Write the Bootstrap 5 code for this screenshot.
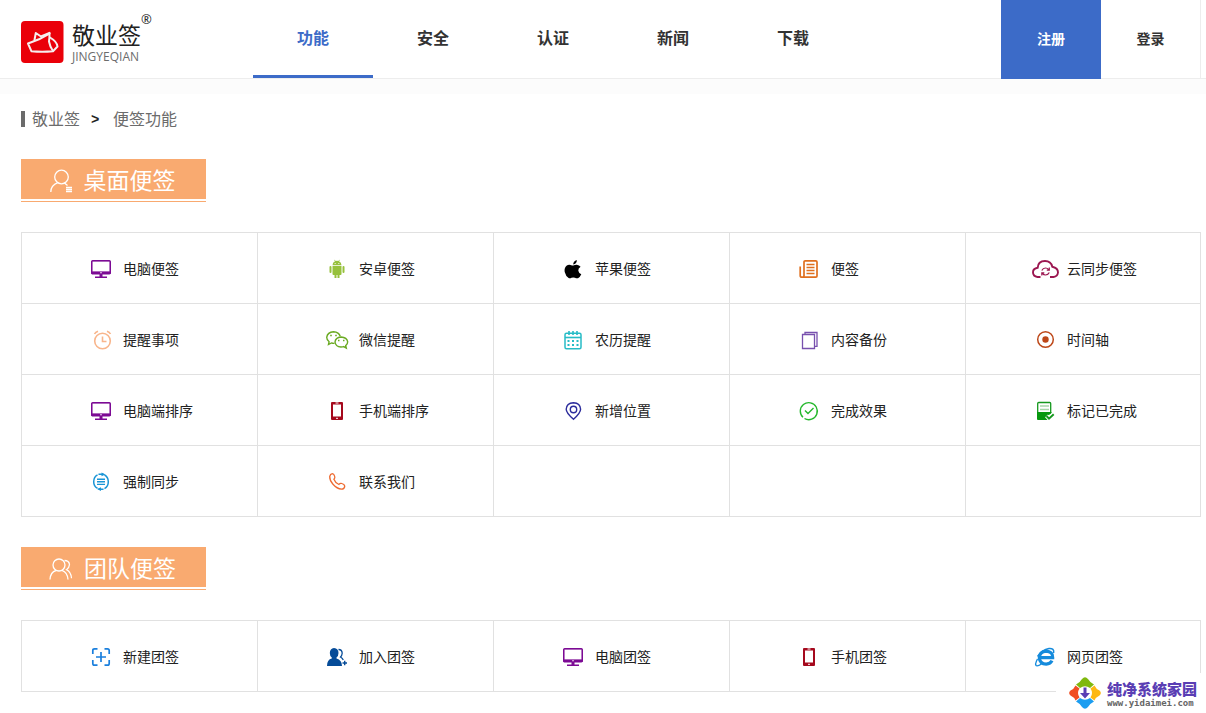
<!DOCTYPE html>
<html lang="zh-CN">
<head>
<meta charset="utf-8">
<meta name="viewport" content="width=device-width, initial-scale=1">
<title>敬业签 - 便签功能</title>
<link rel="stylesheet" href="https://cdn.jsdelivr.net/npm/bootstrap@5.3.0/dist/css/bootstrap.min.css">
<style>
  body { font-family: "Liberation Sans", "Noto Sans CJK SC", sans-serif; font-size: 14px; line-height: 20px; color: #222; background: #fff; }
  a { color: inherit; text-decoration: none; }
  .page-wrap { max-width: 1206px; padding-left: 21px; padding-right: 5px; }
  .site-head { border-bottom: 1px solid #ededed; }
  .head-strip { height: 15px; background: #fcfcfc; }
  .logo { width: 232px; height: 78px; padding-top: 6px; gap: 8px; }
  .logo-cn { font-family: "Noto Sans CJK SC", sans-serif; font-size: 23px; line-height: 28px; color: #222; }
  .logo-en { margin-top: 2px; font-family: "Open Sans", sans-serif; font-size: 12px; line-height: 14px; color: #6c6c6c; }
  .logo-reg { top: -9px; left: 100%; font-family: "Open Sans", sans-serif; font-size: 13px; line-height: 16px; color: #222; }
  .main-nav .nav-link { width: 120px; height: 78px; padding: 2px 0 0; font-size: 16px; font-weight: 700; color: #333; border-bottom: 3px solid transparent; border-radius: 0; }
  .main-nav .nav-link.active { color: #3c6bc8; border-bottom-color: #3c6bc8; }
  .user-link { width: 100px; font-weight: 700; color: #333; border-right: 1px solid #ededed; }
  .user-link.reg { margin-bottom: -1px; padding-bottom: 1px; color: #fff; background: #3c6bc8; border: 0; }
  .crumbs { margin-top: 15px; font-size: 16px; line-height: 20px; color: #6b6b6b; }
  .crumbs a, .crumbs .crumb-sep { padding-top: 2px; }
  .crumbs { height: 20px; }
  .crumbs .crumb-bar { width: 4px; height: 16px; margin-right: 7px; background: #6b6b6b; }
  .crumbs .crumb-sep { width: 33px; padding-left: 11px; font-family: "Liberation Mono", monospace; font-size: 14px; font-weight: 700; color: #222; }
  .group-head { display: inline-block; margin: 30px 0; padding-bottom: 2px; border-bottom: 1px solid #f9aa70; vertical-align: top; }
  .group-head h2 { width: 185px; height: 40px; margin: 0; gap: 11px; padding: 3px 2px 0 0; font-size: 23px; font-weight: 400; line-height: 36px; color: #fff; background: #f9aa70; }
  .func-grid { border-bottom: 1px solid #e1e1e1; }
  .func-grid li { height: 71px; border-top: 1px solid #e1e1e1; border-left: 1px solid #e1e1e1; }
  .func-grid a { height: 100%; padding-left: 65px; gap: 8px; padding-top: 2px; }
  .func-grid svg { flex: none; width: 28px; height: 20px; overflow: visible; }
  .mark-box { width: 150px; height: 40px; padding-left: 13px; gap: 6px; background: #fff; }
  .mark-cn { font-size: 15px; font-weight: 900; line-height: 19px; color: #5a3eb4; }
  .mark-en { font-family: "DejaVu Sans Mono", monospace; font-size: 9px; font-weight: 700; line-height: 8px; color: #666; }
  @media (min-width: 992px) { .func-grid li:nth-child(5n) { border-right: 1px solid #e1e1e1; } }
  @media (max-width: 991px) { .func-grid li:nth-child(2n) { border-right: 1px solid #e1e1e1; } }
</style>
</head>
<body>
<svg width="0" height="0" class="position-absolute" aria-hidden="true">
  <symbol id="i-pc" viewBox="0 0 28 20"><path d="M5 2h18v11H5z" fill="none" stroke="#c08acb" stroke-width="1"/><rect x="4.7" y="1.7" width="18.6" height="13" rx="1" fill="none" stroke="#7c0a94" stroke-width="1.4"/><path d="M4 12.5h20V14q0 1-1 1H5q-1 0-1-1zM12.5 15h3v2.5h4.5V19H8v-1.500h4.500z" fill="#7c0a94"/><path d="M13 13.200h2v1h-2z" fill="#e5cfea"/></symbol>
  <symbol id="i-phone" viewBox="0 0 28 20"><rect x="8" y="1" width="12" height="18" rx="1" fill="#a5091d"/><path d="M10 3.500h8v12h-8z" fill="#fff"/><path d="M12.500 2h3M13 17.300h2" stroke="#fff"/></symbol>
</svg>

<header class="site-head">
  <div class="container-fluid mx-0 page-wrap d-flex">
    <a href="#" class="logo d-flex align-items-center flex-shrink-0">
      <svg width="43" height="42" viewBox="0 0 43 42" aria-hidden="true"><rect width="42.500" height="42" rx="4" fill="#ea0009"/><g fill="none" stroke="#f6efef" stroke-width="2" stroke-linejoin="round" stroke-linecap="round"><path d="M28.500 12.500 18 18.300 7 22.500 10.500 30.300Q21 31.300 32 30.300L36.500 25.500Q36 20.500 29 16.500"/><path d="M28.500 12.500Q28.500 17 28 20.500 29 26 32 30"/><path d="M13.500 19 14.800 12 20 15.500M20.500 15.200 28.500 11.800"/></g></svg>
      <span class="position-relative d-flex flex-column">
        <span class="logo-cn">敬业签</span><span class="logo-en">JINGYEQIAN</span>
        <span class="logo-reg position-absolute">®</span>
      </span>
    </a>
    <nav class="nav main-nav flex-nowrap">
      <a class="nav-link active d-flex align-items-center justify-content-center" aria-current="page" href="#">功能</a>
      <a class="nav-link d-flex align-items-center justify-content-center" href="#">安全</a>
      <a class="nav-link d-flex align-items-center justify-content-center" href="#">认证</a>
      <a class="nav-link d-flex align-items-center justify-content-center" href="#">新闻</a>
      <a class="nav-link d-flex align-items-center justify-content-center" href="#">下载</a>
    </nav>
    <div class="d-flex ms-auto">
      <a href="#" class="user-link reg d-flex align-items-center justify-content-center">注册</a>
      <a href="#" class="user-link d-flex align-items-center justify-content-center">登录</a>
    </div>
  </div>
</header>
<div class="head-strip"></div>

<main class="container-fluid mx-0 page-wrap">
  <nav class="crumbs d-flex align-items-center" aria-label="breadcrumb">
    <span class="crumb-bar"></span><a href="#">敬业签</a><span class="crumb-sep">&gt;</span><a href="#">便签功能</a>
  </nav>

  <section>
    <div class="group-head"><h2 class="d-flex align-items-center justify-content-center">
      <svg width="23" height="24" viewBox="0 0 23 24" fill="none" stroke="#fff" stroke-width="1.300" aria-hidden="true"><circle cx="11.500" cy="8" r="6.800"/><path d="M.8 23q0-6.500 7-9.300M14.500 14l3 2.500M16 18.500h6M16 20.500h6M16 22.500h6"/></svg>桌面便签</h2></div>
    <ul class="func-grid row row-cols-2 row-cols-lg-5 g-0 list-unstyled mb-0">
      <li><a href="#" class="d-flex align-items-center"><svg><use href="#i-pc"/></svg>电脑便签</a></li>
      <li><a href="#" class="d-flex align-items-center"><svg viewBox="0 0 28 20" fill="#97c13c"><path d="M9.500 6.300Q9.500 3.500 12 2.300L11.200 1l.5-.3.9 1.300q1.400-.5 2.800 0l.9-1.300.5.3L16 2.300q2.500 1.200 2.500 4zM9.500 7h9v8q0 1-1 1h-1v3h-2v-3h-1v3h-2v-3h-1q-1 0-1-1zM6.500 8q0-1 1-1t1 1v5q0 1-1 1t-1-1zM19.500 8q0-1 1-1t1 1v5q0 1-1 1t-1-1z"/><path d="M11.700 4h.9v.9h-.9zM15.400 4h.9v.9h-.9z" fill="#fff"/></svg>安卓便签</a></li>
      <li><a href="#" class="d-flex align-items-center"><svg viewBox="0 0 28 20"><path d="M17.800.9Q18 4.700 14.200 5.400 14.200 2 17.800.9M14.200 6.600Q16 5.600 17.800 5.700 20.300 6 21.600 7.800 19 9.200 19.300 11.800 19.700 14.200 22.300 15.200 21 18.200 19 19.200 17.500 19.600 16 18.800 14.300 18 12.500 18.800 11 19.700 9.600 19.100 6.700 17 5.700 13 5 9 7.500 6.800 9.200 5.400 11.500 5.900 13.300 6.600 14.200 6.600"/></svg>苹果便签</a></li>
      <li><a href="#" class="d-flex align-items-center"><svg viewBox="0 0 28 20" fill="none" stroke="#e0701f" stroke-width="1.700"><path d="M9 17V3q0-1.200 1.200-1.200h10.600q1.200 0 1.200 1.200v14q0 1.200-1.200 1.200H7q-1.800 0-1.800-1.800V7.500M9 16.500q0 1.700-1.500 1.700"/><path d="M11.500 5.500h8M11.500 8.500h8M11.500 11.500h8M11.500 14.500h8" stroke-width="1.300"/></svg>便签</a></li>
      <li><a href="#" class="d-flex align-items-center"><svg viewBox="0 0 28 20" fill="none" stroke="#9b1650" stroke-width="1.900"><path d="M9.500 18H6.500Q2 17.500 2 13.300 2 9.500 6.700 8.800 7 2 14 2 20 2 21.300 7.800 27 9 27 13.500 26.500 17.500 22.500 18H19"/><path d="M10.800 11.500q1.200-2.500 3.700-2.500 2 0 3.300 1.700M18.300 13.500q-1.200 2.500-3.700 2.500-2 0-3.300-1.700M18.300 8.500v2.700h-2.500M10.800 16.500v-2.700h2.500" stroke-width="1.200"/></svg>云同步便签</a></li>

      <li><a href="#" class="d-flex align-items-center"><svg viewBox="0 0 28 20" fill="none" stroke="#f8b58b" stroke-width="1.600"><circle cx="15.500" cy="11" r="7.800"/><path d="M7.500 4q1-2 3.500-2.800M23.500 4q-1-2-3.500-2.800"/><path d="M15.500 6.500v5h4"/></svg>提醒事项</a></li>
      <li><a href="#" class="d-flex align-items-center"><svg viewBox="0 0 28 20" fill="none" stroke="#6aaa22" stroke-width="1.400"><path d="M11.500 13.300q-1.500.2-3-.4L5.500 14.500l.6-2.800Q3.700 10 3.700 7.300 4.500 2 10.500 1.700 16 2 17.200 6.300"/><path d="M18 7q-5.500.5-6 5 .5 4.800 6 5 1.500 0 2.700-.4l2.600 1.500-.6-2.500q2-1.500 2-3.800Q24 7.500 18 7z"/><path d="M7.200 5.500h1.600M12.200 5.500h1.600M15 10.500h1.500M20 10.500h1.500" stroke-width="1.600"/></svg>微信提醒</a></li>
      <li><a href="#" class="d-flex align-items-center"><svg viewBox="0 0 28 20" fill="none" stroke="#27bcc6" stroke-width="1.500"><rect x="6" y="3.200" width="16" height="15.600" rx="1.500"/><path d="M6 7.500h16" stroke-width="1.600"/><path d="M10 1v4M14 1v4M18 1v4" stroke-width="1.600"/><path d="M8.500 11h11M8.500 15h11" stroke-width="2" stroke-dasharray="2 2.500"/></svg>农历提醒</a></li>
      <li><a href="#" class="d-flex align-items-center"><svg viewBox="0 0 28 20" fill="none" stroke="#7850ae" stroke-width="1.300"><path d="M7.500 4.500h12v14h-12z"/><path d="M10 4V2.500h12v13.800h-2"/></svg>内容备份</a></li>
      <li><a href="#" class="d-flex align-items-center"><svg viewBox="0 0 28 20"><circle cx="14.500" cy="9.500" r="7.800" fill="none" stroke="#bd4718" stroke-width="1.500"/><circle cx="14.500" cy="9.500" r="3.200" fill="#bd4718"/></svg>时间轴</a></li>

      <li><a href="#" class="d-flex align-items-center"><svg><use href="#i-pc"/></svg>电脑端排序</a></li>
      <li><a href="#" class="d-flex align-items-center"><svg><use href="#i-phone"/></svg>手机端排序</a></li>
      <li><a href="#" class="d-flex align-items-center"><svg viewBox="0 0 28 20" fill="none" stroke="#2c2c9c" stroke-width="1.400"><path d="M14.500 18.300Q7.200 12 7.200 8.300 7.500 2 14.500 1.700 21.300 2 21.600 8.300 21.600 12 14.500 18.300z"/><circle cx="14.500" cy="8.500" r="3.200"/></svg>新增位置</a></li>
      <li><a href="#" class="d-flex align-items-center"><svg viewBox="0 0 28 20" fill="none" stroke="#25b82d" stroke-width="1.400"><path d="M8 16.300Q5.300 14 5.300 10A8.500 8.500 0 1 1 9.500 17.500"/><path d="M10 9.500l3 3 5.500-5.500"/></svg>完成效果</a></li>
      <li><a href="#" class="d-flex align-items-center"><svg viewBox="0 0 28 20"><path d="M6.700 12V2.500q0-1 1-1h11q1 0 1 1V12" fill="#fff" stroke="#15981e" stroke-width="1.300"/><path d="M9 5h9M9 8.500h9" stroke="#a5d6a8" stroke-width="1.300"/><path d="M6 11h14.500v1.500L16 15l1 4H7q-1 0-1-1z" fill="#07980f"/><path d="M15.500 14.800l2.500 2.700 4.500-4.500" fill="none" stroke="#fff" stroke-width="4"/><path d="M15.500 15l2.500 2.700 4.700-4.500" fill="none" stroke="#15981e" stroke-width="1.900"/></svg>标记已完成</a></li>

      <li><a href="#" class="d-flex align-items-center"><svg viewBox="0 0 28 20" fill="none" stroke="#1a95d6" stroke-width="1.500"><path d="M10.500 2.900Q6.700 5 6.700 9.800T10.500 16.300M17.500 3Q21.300 5 21.300 9.800T17.500 16.600"/><path d="M11.500 2.200h5M11.500 17.300h5"/><path d="M14.500.5l4 2-4 1.700zM14 15.300l-4 1.800 4 2z" fill="#1a95d6" stroke="none"/><path d="M10 7.200h8M10 9.800h8M10 12.400h8" stroke-width="1.400"/></svg>强制同步</a></li>
      <li><a href="#" class="d-flex align-items-center"><svg viewBox="0 0 28 20" fill="none" stroke="#ee6b32" stroke-width="1.300"><path d="M6.700 4.500q.5-2.500 2.600-2.800 1.500 0 2.300 2.300.8 2-.7 3.200 1.500 3.800 5 5.300 1.200-1.700 3-1 3 1 2.800 3.200-.7 2.500-3.200 2.500-4.500-.5-8.500-5-3.500-4-3.300-7.700z"/></svg>联系我们</a></li>
      <li></li><li></li><li></li>
    </ul>
  </section>

  <section>
    <div class="group-head"><h2 class="d-flex align-items-center justify-content-center">
      <svg width="24" height="22" viewBox="0 0 24 22" fill="none" stroke="#fff" stroke-width="1.300" aria-hidden="true"><circle cx="10" cy="7" r="6"/><path d="M1 21.500q.5-7.500 6-9M13 12.300q5.500 2 6 9.200M15.500 2.500q4.500 0 5 4-.3 3.500-3 5.200 4.500 2.300 5 8.500"/></svg>团队便签</h2></div>
    <ul class="func-grid row row-cols-2 row-cols-lg-5 g-0 list-unstyled mb-0">
      <li><a href="#" class="d-flex align-items-center"><svg viewBox="0 0 28 20" fill="none" stroke="#1a7fdd" stroke-width="1.700"><path d="M5.800 7V3.500q0-1.700 1.700-1.700h3M17.500 1.800h3q1.700 0 1.700 1.700V7M22.200 13v3.500q0 1.700-1.700 1.700h-3M10.500 18.200h-3q-1.700 0-1.700-1.700V13M9 10h10M14 5v10"/></svg>新建团签</a></li>
      <li><a href="#" class="d-flex align-items-center"><svg viewBox="0 0 28 20"><path d="M11 1q4.500.3 4.500 5 0 3-2 4.500v1q5.500 1.500 5.500 7.500H4q0-6.500 4.800-7.500v-1q-2-1.500-2-4.500Q7 1.300 11 1" fill="#054b98"/><path d="M15.500 2.500q3.500 0 3.700 3.700-.2 2.300-1.700 3.800 2 1.200 2.800 3" fill="none" stroke="#054b98" stroke-width="1.300"/><path d="M19.500 16h4.500M21.700 13.800v4.500" stroke="#054b98" stroke-width="1.400"/></svg>加入团签</a></li>
      <li><a href="#" class="d-flex align-items-center"><svg><use href="#i-pc"/></svg>电脑团签</a></li>
      <li><a href="#" class="d-flex align-items-center"><svg><use href="#i-phone"/></svg>手机团签</a></li>
      <li><a href="#" class="d-flex align-items-center"><svg viewBox="0 0 28 20" fill="none"><path d="M9.500 10.700h12.200Q22 4.500 15 4.200 8.500 4.700 8.300 11 9 17 15.200 17.200 19.500 17 21 13.700" stroke="#158bdc" stroke-width="3.200"/><path d="M6.500 12Q3.500 17.500 5.300 18.700 7 19.300 10.500 17M6.500 9.500Q11 3 18 1.500 23.500 1 22.700 6" stroke="#158bdc" stroke-width="1.400"/></svg>网页团签</a></li>
    </ul>
  </section>
</main>

<a href="#" class="mark-box position-fixed bottom-0 end-0 d-flex align-items-center">
  <svg width="32" height="32" viewBox="0 0 32 32" class="flex-shrink-0" aria-hidden="true">
    <path d="M7 7.500Q11 5.500 13 2 16-1.500 19 2 21 5.500 25 7.500L21 11Q16 7.500 11 11z" fill="#7fb80e"/>
    <path d="M7 24.500Q11 26.500 13 30 16 33.500 19 30 21 26.500 25 24.500L21 21Q16 24.500 11 21z" fill="#1c9df0"/>
    <path d="M6.500 8.500Q5 12 1.500 13.500-1.200 16 1.500 18.500 5 20 6.500 23.500L10.500 20.500Q7.500 16 10.500 11.500z" fill="#f04e23"/>
    <path d="M25.500 8.500Q27 12 30.500 13.500 33.200 16 30.500 18.500 27 20 25.500 23.500L21.500 20.500Q24.500 16 21.500 11.500z" fill="#fdb813"/>
    <path d="M14.500 10.500h3V16h3.500l-5 5.500-5-5.500h3.500z" fill="#5a3eb4"/>
  </svg>
  <span class="d-flex flex-column"><span class="mark-cn">纯净系统家园</span><span class="mark-en">www.yidaimei.com</span></span>
</a>
<script src="https://cdn.jsdelivr.net/npm/bootstrap@5.3.0/dist/js/bootstrap.bundle.min.js"></script>
</body>
</html>
